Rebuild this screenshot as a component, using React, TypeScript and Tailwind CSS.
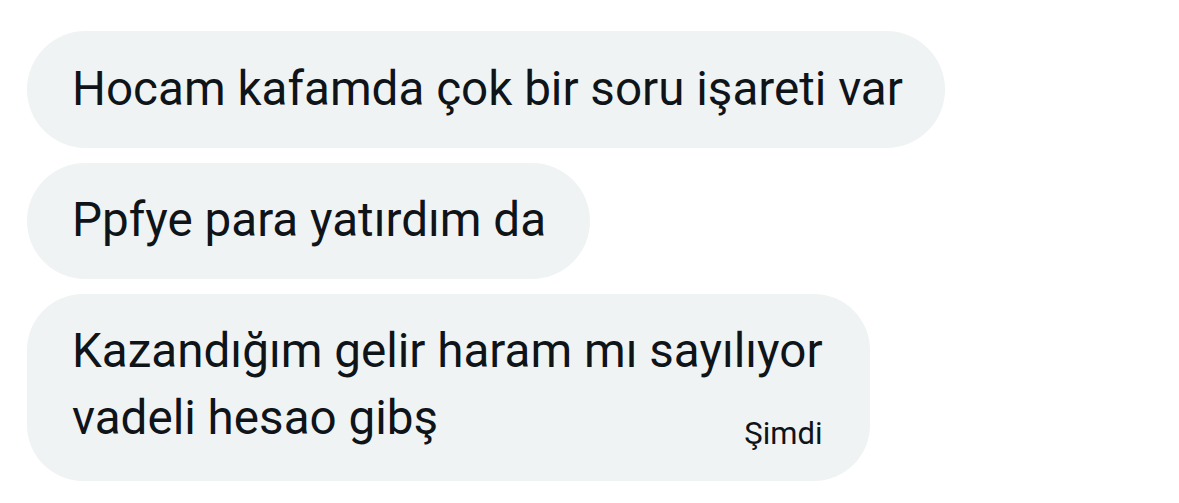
import React from 'react';

const Bubble = ({ children, className = '' }: { children: React.ReactNode; className?: string }) => (
  <div className={`w-fit bg-[#eff3f4] text-[#0f1419] ${className}`}>{children}</div>
);

const App = () => {
  return (
    <div
      className="w-[1179px] h-[503px] bg-white pt-[31px] pl-[27px] flex flex-col gap-[15px] overflow-hidden"
      style={{ fontFamily: 'Roboto, "Noto Sans", sans-serif' }}
    >
      <Bubble className="h-[117px] rounded-full pl-[45px] pr-[42px] flex items-center text-[47.6px] leading-none">
        Hocam kafamda çok bir soru işareti var
      </Bubble>
      <Bubble className="h-[116px] rounded-full pl-[45px] pr-[44px] flex items-center text-[47.6px] leading-none">
        Ppfye para yatırdım da
      </Bubble>
      <Bubble className="w-[843px] h-[187px] rounded-[56px] pl-[45px] pr-[47px] pt-[24px]">
        <p className="text-[47.6px] leading-[67px]">Kazandığım gelir haram mı sayılıyor</p>
        <div className="flex items-baseline justify-between">
          <p className="text-[47.6px] leading-[67px]">vadeli hesao gibş</p>
          <span className="text-[31px] leading-none relative top-[10px]">Şimdi</span>
        </div>
      </Bubble>
    </div>
  );
};

export default App;
